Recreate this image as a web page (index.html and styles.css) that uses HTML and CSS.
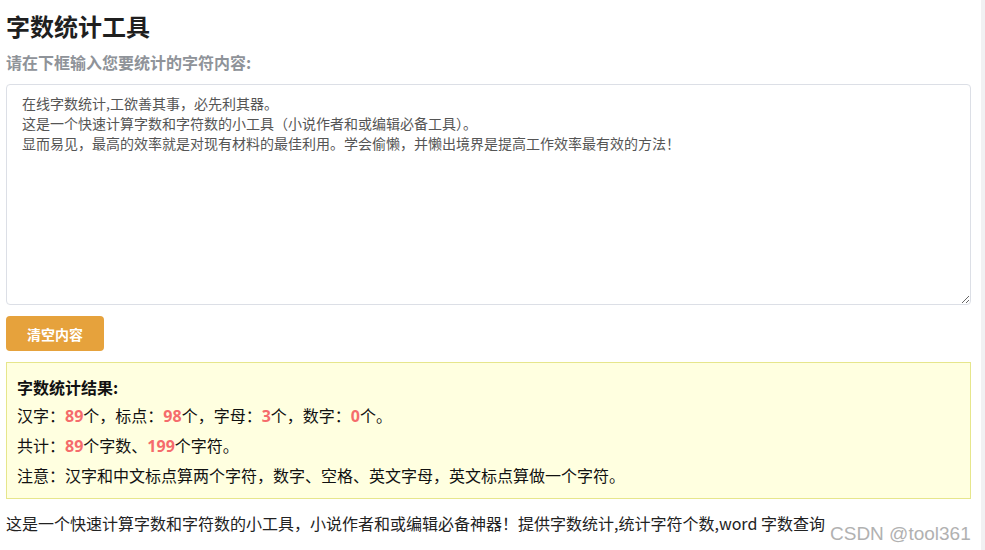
FILE: index.html
```html
<!DOCTYPE html>
<html lang="zh">
<head>
<meta charset="utf-8">
<title>字数统计工具</title>
<link rel="stylesheet" href="styles.css">
</head>
<body>
<div class="page">
  <main class="main">
    <h1 class="title">字数统计工具</h1>
    <h2 class="subtitle">请在下框输入您要统计的字符内容:</h2>
    <textarea class="input">在线字数统计,工欲善其事，必先利其器。
这是一个快速计算字数和字符数的小工具（小说作者和或编辑必备工具）。
显而易见，最高的效率就是对现有材料的最佳利用。学会偷懒，并懒出境界是提高工作效率最有效的方法！</textarea>
    <button class="btn">清空内容</button>
    <section class="result">
      <div class="result-title">字数统计结果:</div>
      <div class="line">汉字：<b class="num">89</b>个，标点：<b class="num">98</b>个，字母：<b class="num">3</b>个，数字：<b class="num">0</b>个。</div>
      <div class="line">共计：<b class="num">89</b>个字数、<b class="num">199</b>个字符。</div>
      <div class="line">注意：汉字和中文标点算两个字符，数字、空格、英文字母，英文标点算做一个字符。</div>
    </section>
    <p class="footer">这是一个快速计算字数和字符数的小工具，小说作者和或编辑必备神器！提供字数统计,统计字符个数,word 字数查询<span class="mark">CSDN @tool361</span></p>
  </main>
  <div class="scrollbar"></div>
</div>
</body>
</html>
```
FILE: styles.css
```css
html, body {
  margin: 0;
  padding: 0;
  background: #fff;
}
body {
  font-family: "Noto Sans CJK SC", "Noto Sans", sans-serif;
  color: #222;
}
.page {
  display: flex;
  width: 985px;
  height: 550px;
  overflow: hidden;
}
.main {
  width: 965px;
  margin-left: 6px;
  margin-right: 10px;
}
.scrollbar {
  width: 4px;
  background: #f1f1f3;
}
.title {
  margin: 10px 0 0;
  font-size: 24px;
  line-height: 32px;
  font-weight: 700;
  color: #1f1f1f;
}
.subtitle {
  margin: 8px 0 0;
  font-size: 16px;
  line-height: 24px;
  font-weight: 700;
  color: #8f9399;
}
.input {
  display: block;
  box-sizing: border-box;
  width: 965px;
  height: 221px;
  margin-top: 10px;
  padding: 8px 15px;
  border: 1px solid #dcdfe6;
  border-radius: 4px;
  font-family: "Noto Sans CJK SC", sans-serif;
  font-size: 14px;
  line-height: 20px;
  color: #555;
  resize: vertical;
  outline: none;
}
.btn {
  display: block;
  margin-top: 11px;
  width: 98px;
  height: 35px;
  border: none;
  border-radius: 4px;
  background: #e6a23c;
  color: #fff;
  font-family: "Noto Sans CJK SC", sans-serif;
  font-size: 14px;
  font-weight: 600;
  padding: 0;
}
.result {
  box-sizing: border-box;
  margin-top: 11px;
  height: 137px;
  padding: 10px 10px 0;
  background: #ffffe0;
  border: 1px solid #e6e68c;
  font-size: 16px;
}
.result-title {
  font-weight: 700;
  line-height: 28px;
  color: #111;
}
.line {
  line-height: 29px;
  color: #111;
}
.num {
  color: #f56c6c;
  font-family: "Open Sans", "Noto Sans", sans-serif;
  font-weight: 700;
}
.footer {
  margin: 12px 0 0;
  font-size: 16px;
  line-height: 24px;
  color: #222;
  position: relative;
  white-space: nowrap;
}
.mark {
  position: absolute;
  left: 824px;
  top: 11px;
  font-family: "Liberation Sans", Arial, sans-serif;
  font-size: 19px;
  color: #a9a9a9;
  opacity: 0.9;
}
```
